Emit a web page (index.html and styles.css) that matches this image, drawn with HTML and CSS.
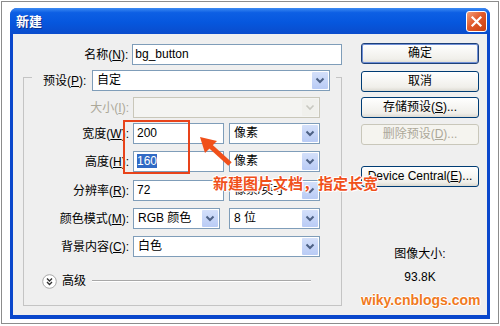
FILE: index.html
```html
<!DOCTYPE html>
<html lang="zh-CN">
<head>
  <meta charset="UTF-8" />
  <title>新建</title>
  <link rel="stylesheet" href="styles.css">
</head>
<body>
  <div class="frame">
    <div class="window">
      <div class="titlebar">
        <span class="title">新建</span>
        <span class="close-btn">
          <svg width="19" height="19" viewBox="0 0 19 19"><path d="M5.5 5.5 L13.5 13.5 M13.5 5.5 L5.5 13.5" stroke="#fff" stroke-width="2.2" stroke-linecap="square"/></svg>
        </span>
      </div>
      <div class="content">
        <div class="left">
          <div class="row name-row">
            <span class="lbl">名称(<u>N</u>):</span>
            <div class="input w-name">bg_button</div>
          </div>
          <fieldset class="group">
            <legend class="preset">
              <div class="preset-inner">
                <span class="preset-lbl">预设(<u>P</u>):</span>
                <div class="select w-preset"><span class="val">自定</span><span class="drop"><svg width="16" height="17" viewBox="0 0 16 17"><polyline points="4.5,6.5 8,10 11.5,6.5" fill="none" stroke="#4d6185" stroke-width="2"/></svg></span></div>
              </div>
            </legend>

            <div class="row r-size disabled">
              <span class="g-lbl">大小(<u>I</u>):</span>
              <div class="select w-full off"><span class="val"></span><span class="drop"><svg width="16" height="17" viewBox="0 0 16 17"><polyline points="4.5,6.5 8,10 11.5,6.5" fill="none" stroke="#c8c8c0" stroke-width="1.6"/></svg></span></div>
            </div>

            <div class="row r-width">
              <span class="g-lbl">宽度(<u>W</u>):</span>
              <div class="input w-half">200</div>
              <div class="select w-unit"><span class="val">像素</span><span class="drop"><svg width="16" height="17" viewBox="0 0 16 17"><polyline points="4.5,6.5 8,10 11.5,6.5" fill="none" stroke="#4d6185" stroke-width="2"/></svg></span></div>
            </div>

            <div class="row r-gap">
              <span class="g-lbl">高度(<u>H</u>):</span>
              <div class="input w-half"><span class="sel-text">160</span></div>
              <div class="select w-unit"><span class="val">像素</span><span class="drop"><svg width="16" height="17" viewBox="0 0 16 17"><polyline points="4.5,6.5 8,10 11.5,6.5" fill="none" stroke="#4d6185" stroke-width="2"/></svg></span></div>
            </div>

            <div class="row r-gap r-res">
              <span class="g-lbl">分辨率(<u>R</u>):</span>
              <div class="input w-half">72</div>
              <div class="select w-unit"><span class="val">像素/英寸</span><span class="drop"><svg width="16" height="17" viewBox="0 0 16 17"><polyline points="4.5,6.5 8,10 11.5,6.5" fill="none" stroke="#4d6185" stroke-width="2"/></svg></span></div>
            </div>

            <div class="row r-gap">
              <span class="g-lbl">颜色模式(<u>M</u>):</span>
              <div class="select w-mode"><span class="val">RGB 颜色</span><span class="drop"><svg width="16" height="17" viewBox="0 0 16 17"><polyline points="4.5,6.5 8,10 11.5,6.5" fill="none" stroke="#4d6185" stroke-width="2"/></svg></span></div>
              <div class="select w-unit"><span class="val">8 位</span><span class="drop"><svg width="16" height="17" viewBox="0 0 16 17"><polyline points="4.5,6.5 8,10 11.5,6.5" fill="none" stroke="#4d6185" stroke-width="2"/></svg></span></div>
            </div>

            <div class="row r-gap">
              <span class="g-lbl">背景内容(<u>C</u>):</span>
              <div class="select w-full"><span class="val">白色</span><span class="drop"><svg width="16" height="17" viewBox="0 0 16 17"><polyline points="4.5,6.5 8,10 11.5,6.5" fill="none" stroke="#4d6185" stroke-width="2"/></svg></span></div>
            </div>

            <div class="advanced">
              <svg class="adv-icon" width="15" height="15" viewBox="0 0 15 15"><circle cx="7.5" cy="7.5" r="6.8" fill="#fff" stroke="#a8a8a8"/><polyline points="5,4.5 7.5,7 10,4.5" fill="none" stroke="#333" stroke-width="1.4"/><polyline points="5,8 7.5,10.5 10,8" fill="none" stroke="#333" stroke-width="1.4"/></svg>
              <span class="adv-text">高级</span>
              <span class="adv-line"></span>
            </div>
          </fieldset>
        </div>

        <div class="right">
          <div class="btn default">确定</div>
          <div class="btn b-cancel">取消</div>
          <div class="btn b-save">存储预设(<u>S</u>)...</div>
          <div class="btn b-del off">删除预设(<u>D</u>)...</div>
          <div class="btn b-device">Device Central(<u>E</u>)...</div>
          <div class="img-size">图像大小:</div>
          <div class="img-kb">93.8K</div>
          <div class="watermark">wiky.cnblogs.com</div>
        </div>
      </div>
    </div>

    <div class="mark-box"></div>
    <svg class="mark-arrow" width="40" height="36" viewBox="0 0 40 36">
      <line x1="12" y1="12" x2="34" y2="32" stroke="#f0501a" stroke-width="5"/>
      <polygon points="4,5 21,9 9,21" fill="#f0501a"/>
    </svg>
    <div class="mark-text">新建图片文档，指定长宽</div>
  </div>
</body>
</html>
```

FILE: styles.css
```css
body {
  margin: 0;
  background: #fff;
  font-family: "Liberation Sans", "Noto Sans CJK SC", sans-serif;
  font-size: 12px;
  color: #000;
}

.frame {
  position: relative;
  width: 498px;
  height: 323px;
  margin: 1px 0 0 1px;
  border: 1px solid #8c8c8c;
  box-sizing: border-box;
  padding: 6px 0 0 8px;
}

.window {
  width: 480px;
  height: 311px;
  box-sizing: border-box;
  background: #0a47cc;
  border-radius: 7px 7px 0 0;
  padding: 0 3px 4px;
  display: flex;
  flex-direction: column;
}

.titlebar {
  height: 26px;
  margin: 0 -3px;
  padding: 0 3px 0 6px;
  display: flex;
  align-items: center;
  justify-content: space-between;
  border-radius: 7px 7px 0 0;
  background: linear-gradient(#3d8bf2 0%, #0d5fe4 18%, #0657de 55%, #0a4ccc 100%);
}

.title {
  color: #fff;
  font-weight: bold;
  font-size: 13px;
  line-height: 16px;
  font-family: "Noto Sans CJK SC", sans-serif;
  text-shadow: 1px 1px 0 #0a2f90;
}

.close-btn {
  width: 21px;
  height: 21px;
  box-sizing: border-box;
  border: 1px solid #fff;
  border-radius: 3px;
  background: linear-gradient(135deg, #f3a07a 0%, #e15a2c 45%, #c9400f 100%);
  display: flex;
  align-items: center;
  justify-content: center;
}

.content {
  flex: 1;
  background: #efefef;
  display: flex;
  padding-top: 9px;
}

.left {
  width: 329px;
}

.row {
  display: flex;
  align-items: center;
  height: 21px;
}

.name-row {
  margin-top: 1px;
}

.lbl {
  width: 120px;
  box-sizing: border-box;
  padding-right: 4px;
  text-align: right;
  line-height: 16px;
}

.g-lbl {
  width: 101px;
  box-sizing: border-box;
  padding-right: 4px;
  text-align: right;
  line-height: 16px;
  white-space: nowrap;
}

.input {
  height: 21px;
  box-sizing: border-box;
  border: 1px solid #7f9db9;
  background: #fff;
  padding-left: 3px;
  line-height: 19px;
}

.w-name {
  width: 211px;
  padding-left: 2px;
}

.w-half {
  width: 91px;
}

.sel-text {
  background: #316ac5;
  color: #fff;
}

.select {
  height: 21px;
  box-sizing: border-box;
  border: 1px solid #7f9db9;
  background: #fff;
  display: flex;
  padding-left: 4px;
}

.select .val {
  flex: 1;
  line-height: 19px;
  white-space: nowrap;
  overflow: hidden;
}

.drop {
  width: 16px;
  margin: 1px;
  border-radius: 1px;
  background: linear-gradient(#d4e0fa, #b9cbf5);
  display: flex;
  align-items: center;
  justify-content: center;
}

.select.off {
  border-color: #c9c7ba;
  background: #f4f4f2;
}

.select.off .drop {
  background: #f0f0ec;
}

.w-preset {
  width: 238px;
}

.w-full {
  width: 187px;
}

.w-unit {
  width: 91px;
  margin-left: 5px;
}

.w-mode {
  width: 87px;
  margin-right: 4px;
}

.w-mode + .w-unit {
  margin-left: 5px;
}

.group {
  margin: -1px 0 0 10px;
  width: 319px;
  box-sizing: border-box;
  border: 1px solid #c4c4c4;
  padding: 6px 8px 16px 8px;
  min-width: 0;
}

.preset {
  padding: 6px 6px 0 11px;
}

.preset-inner {
  display: flex;
  align-items: center;
}

.preset-lbl {
  width: 49px;
  line-height: 16px;
}

.disabled .g-lbl {
  color: #aca899;
}

.r-width {
  margin-top: 5px;
}

.r-gap {
  margin-top: 7px;
}

.r-res {
  margin-top: 8px;
}

.advanced {
  display: flex;
  align-items: center;
  height: 16px;
  margin-top: 16px;
  padding-left: 10px;
}

.adv-text {
  margin-left: 5px;
  line-height: 16px;
}

.adv-line {
  flex: 1;
  height: 0;
  border-top: 1px solid #a8a8a8;
  border-bottom: 1px solid #fff;
  margin: 0 22px 0 6px;
}

.right {
  width: 118px;
  margin-left: 19px;
  display: flex;
  flex-direction: column;
  align-items: stretch;
}

.btn {
  height: 21px;
  box-sizing: border-box;
  border: 1px solid #003c74;
  border-radius: 3px;
  background: linear-gradient(#ffffff, #f0efea 80%, #dcdad2);
  text-align: center;
  line-height: 19px;
  white-space: nowrap;
}

.btn.default {
  border-color: #1c3f78;
  box-shadow: inset 0 0 0 1px #6f8fd6;
}

.b-cancel {
  margin-top: 7px;
}

.b-save {
  margin-top: 5px;
}

.b-del {
  margin-top: 6px;
}

.btn.off {
  border-color: #c9c7ba;
  color: #aca899;
  background: #f5f4ef;
}

.b-device {
  margin-top: 21px;
}

.img-size {
  margin-top: 60px;
  text-align: center;
  line-height: 14px;
}

.img-kb {
  margin-top: 9px;
  text-align: center;
  line-height: 14px;
}

.watermark {
  margin-top: 8px;
  text-align: center;
  font-weight: bold;
  font-size: 14px;
  line-height: 17px;
  color: #f07a1e;
  text-shadow: 1px 0 0 #fff, -1px 0 0 #fff, 0 1px 0 #fff, 0 -1px 0 #fff;
}

/* annotations drawn over the dialog */
.mark-box {
  position: absolute;
  left: 121px;
  top: 118px;
  width: 67px;
  height: 54px;
  box-sizing: border-box;
  border: 2px solid #e8431a;
}

.mark-arrow {
  position: absolute;
  left: 194px;
  top: 130px;
}

.mark-text {
  position: absolute;
  left: 211px;
  top: 172px;
  font-family: "Noto Sans CJK SC", sans-serif;
  font-weight: bold;
  font-size: 15px;
  line-height: 18px;
  color: #f0501a;
  white-space: nowrap;
  text-shadow: 1px 0 0 #fff, -1px 0 0 #fff, 0 1px 0 #fff, 0 -1px 0 #fff, 1px 1px 0 #fff, -1px -1px 0 #fff;
}
```
